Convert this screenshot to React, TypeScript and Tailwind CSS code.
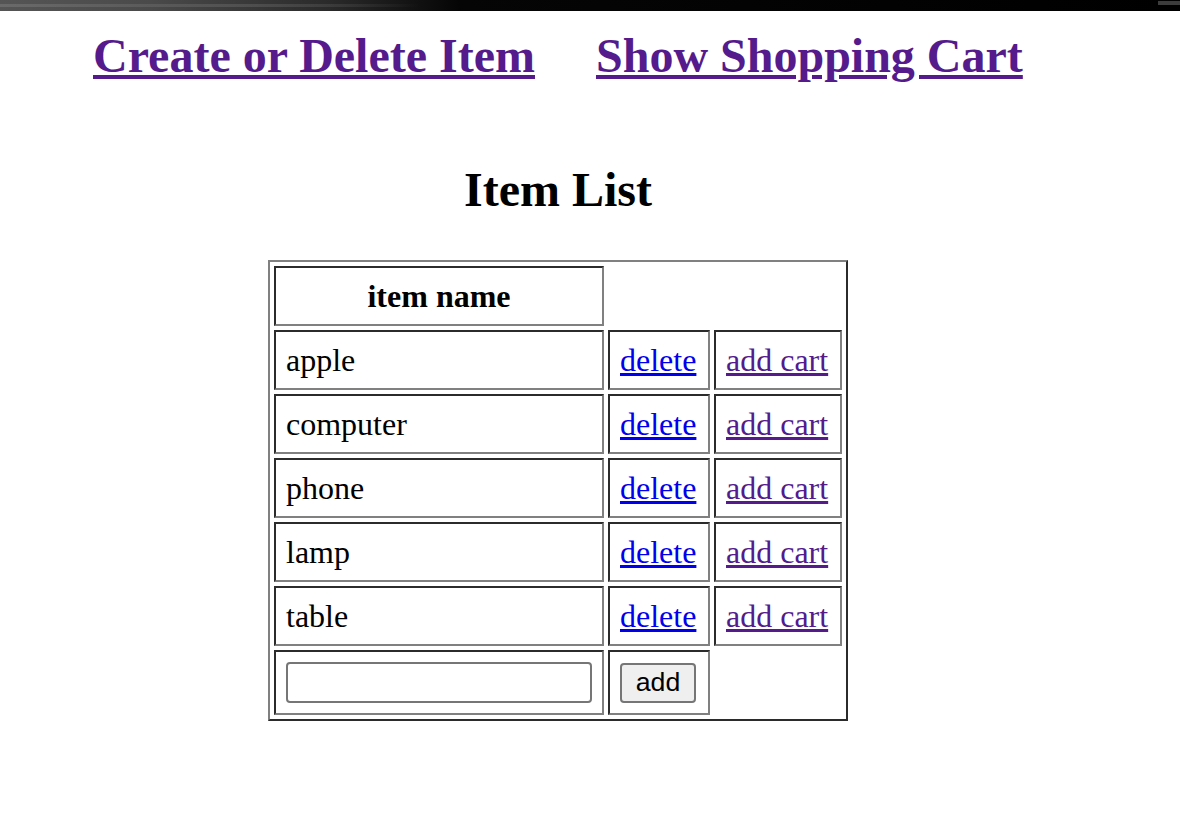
const items = ["apple", "computer", "phone", "lamp", "table"];

const cell =
  "border-2 border-solid border-t-[#2b2b2b] border-l-[#2b2b2b] border-r-[#808080] border-b-[#808080] p-[10px] align-middle";

export default function App() {
  return (
    <div className="min-h-screen bg-white text-black font-['Liberation_Serif','Times_New_Roman',serif]">
      {/* window chrome strip at the top of the shot */}
      <div className="relative h-[11px] bg-[linear-gradient(90deg,#555_0px,#4a4a4a_150px,#2a2a2a_330px,#050505_460px,#000_100%)]">
        <div className="absolute left-0 top-[4px] h-[3px] w-[420px] bg-[linear-gradient(90deg,#6a6a6a,#555_200px,transparent)]" />
        <div className="absolute right-0 top-[1px] h-[4px] w-[22px] bg-[#3c3c3c]" />
      </div>

      <nav className="mt-[17px] ml-[93px] flex gap-[61px] text-[48px] font-bold leading-[56px]">
        <a href="#" className="text-[#551a8b] underline">
          Create or Delete Item
        </a>
        <a href="#" className="text-[#551a8b] underline">
          Show Shopping Cart
        </a>
      </nav>

      <div className="ml-[268px] w-[580px]">
        <h2 className="mt-[78px] text-center text-[48px] font-bold leading-[56px]">
          Item List
        </h2>

        <table className="mt-[42px] border-separate border-spacing-[4px] border-2 border-solid border-t-[#808080] border-l-[#808080] border-r-[#2b2b2b] border-b-[#2b2b2b] text-[32px] leading-[36px]">
          <tbody>
            <tr>
              <th className={`${cell} w-[330px] text-center font-bold`}>item name</th>
            </tr>
            {items.map((name) => (
              <tr key={name}>
                <td className={`${cell} w-[330px] text-left`}>{name}</td>
                <td className={`${cell} w-[102px]`}>
                  <a href="#" className="text-[#0000ee] underline">
                    delete
                  </a>
                </td>
                <td className={`${cell} w-[128px]`}>
                  <a href="#" className="text-[#551a8b] underline">
                    add cart
                  </a>
                </td>
              </tr>
            ))}
            <tr>
              <td className={`${cell} w-[330px]`}>
                <input
                  type="text"
                  className="block h-[41px] w-[306px] rounded-[4px] border-2 border-solid border-[#767676] bg-white px-1 text-[26px] outline-none"
                />
              </td>
              <td className={`${cell} w-[102px]`}>
                <button className="flex h-[40px] w-[76px] items-center justify-center rounded-[4px] border-2 border-solid border-[#767676] bg-[#efefef] font-['Liberation_Sans',Arial,sans-serif] text-[26.7px] leading-none text-black">
                  add
                </button>
              </td>
            </tr>
          </tbody>
        </table>
      </div>
    </div>
  );
}
